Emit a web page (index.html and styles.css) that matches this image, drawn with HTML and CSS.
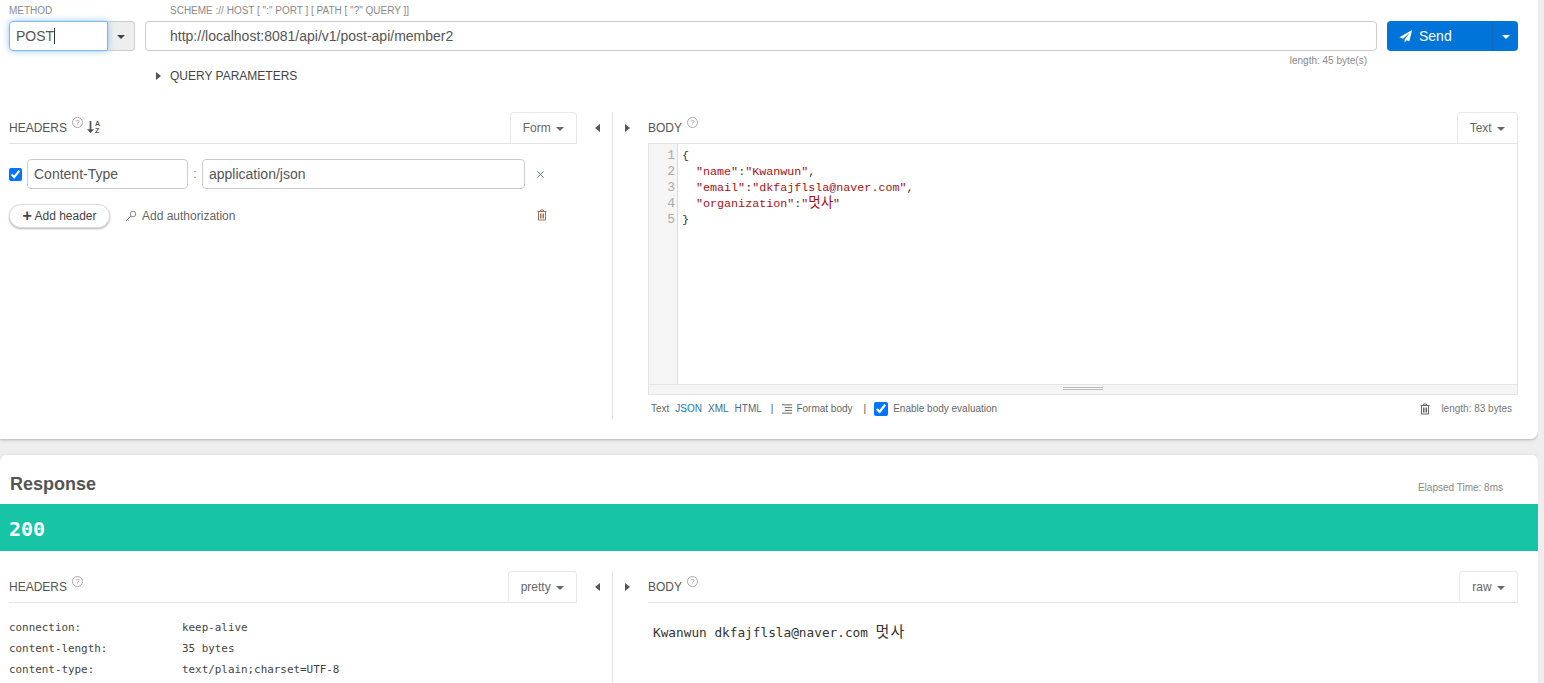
FILE: index.html
```html
<!DOCTYPE html>
<html lang="en">
<head>
    <meta charset="UTF-8">
    <meta name="viewport" content="width=device-width, initial-scale=1.0">
    <title>Talend API Tester</title>
    <link rel="stylesheet" href="styles.css">
</head>
<body>
    <div class="panel request">
        <div class="url-row">
            <div class="method">
                <label class="hint">METHOD</label>
                <div class="method-box">
                    <div class="method-input">POST<span class="cursor"></span></div>
                    <button class="method-caret"><span class="caret"></span></button>
                </div>
            </div>
            <div class="url">
                <label class="hint url-hint">SCHEME :// HOST [ ":" PORT ] [ PATH [ "?" QUERY ]]</label>
                <input class="url-input" type="text" value="http://localhost:8081/api/v1/post-api/member2">
                <div class="url-length">length: 45 byte(s)</div>
            </div>
            <div class="send">
                <button class="send-main">
                    <svg class="send-icon" viewBox="0 0 16 16"><path d="M15 1 L0.5 9.4 L4.6 11 L12.6 4 L6.4 11.9 L6.4 15.4 L8.7 12.9 L11.8 14.2 Z"/></svg>
                    Send
                </button>
                <button class="send-more"><span class="caret white"></span></button>
            </div>
        </div>
        <div class="query"><span class="arrow-right"></span>QUERY PARAMETERS</div>

        <div class="split">
            <div class="left">
                <div class="pane-head">
                    <span class="pane-title">HEADERS</span>
                    <span class="help">?</span>
                    <span class="sort">
                        <svg viewBox="0 0 8 14"><path d="M3 0h2v9.500h3L4 14 0 9.500h3z"/></svg>
                        <span class="sort-letters">A<br>Z</span>
                    </span>
                    <button class="tab">Form <span class="caret"></span></button>
                </div>
                <div class="header-row">
                    <input class="check" type="checkbox" checked>
                    <input class="field field-name" type="text" value="Content-Type">
                    <span class="colon">:</span>
                    <input class="field field-value" type="text" value="application/json">
                    <svg class="remove" viewBox="0 0 10 10"><path d="M1.500 1.500l7 7M8.500 1.500l-7 7"/></svg>
                </div>
                <div class="header-actions">
                    <button class="add-header"><b>+</b> Add header</button>
                    <span class="add-auth">
                        <svg class="key" viewBox="0 0 12 12"><circle cx="8" cy="4" r="2.800"/><path d="M6 6 1 11M2.500 9.500l1.200 1.200"/></svg>
                        Add authorization
                    </span>
                    <svg class="trash trash-red" viewBox="0 0 12 12"><path d="M4.500 2V1h3v1M1.500 2.500h9M2.500 2.500v8.500h7V2.500M4.500 4.500V9.500M6 4.500V9.500M7.500 4.500V9.500"/></svg>
                </div>
            </div>
            <div class="toggles">
                <span class="arrow-left"></span>
            </div>
            <div class="right">
                <div class="right-toggle"><span class="arrow-right"></span></div>
                <div class="right-main">
                    <div class="pane-head">
                        <span class="pane-title">BODY</span>
                        <span class="help">?</span>
                        <button class="tab">Text <span class="caret"></span></button>
                    </div>
                    <div class="editor">
                        <div class="editor-main">
                            <div class="gutter">1<br>2<br>3<br>4<br>5</div>
<pre class="code">{
  <span class="str">"name"</span>:<span class="str">"Kwanwun"</span>,
  <span class="str">"email"</span>:<span class="str">"dkfajflsla@naver.com"</span>,
  <span class="str">"organization"</span>:<span class="str">"<span class="ko">멋사</span>"</span>
}</pre>
                        </div>
                        <div class="editor-grip"><span></span></div>
                    </div>
                    <div class="body-foot">
                        <span class="foot-link plain">Text</span>
                        <span class="foot-link active">JSON</span>
                        <span class="foot-link">XML</span>
                        <span class="foot-link">HTML</span>
                        <span class="sep">|</span>
                        <svg class="format" viewBox="0 0 12 10"><path d="M0 .5h11M3 3.500h8M3 6.500h8M0 9.500h11"/></svg>
                        <span class="format-label">Format body</span>
                        <span class="sep sep-2">|</span>
                        <input class="check check-foot" type="checkbox" checked>
                        <span class="eval">Enable body evaluation</span>
                        <svg class="trash foot-trash" viewBox="0 0 12 12"><path d="M4.500 2V1h3v1M1.500 2.500h9M2.500 2.500v8.500h7V2.500M4.500 4.500V9.500M6 4.500V9.500M7.500 4.500V9.500"/></svg>
                        <span class="foot-length">length: 83 bytes</span>
                    </div>
                </div>
            </div>
        </div>
    </div>

    <div class="panel response">
        <div class="response-head">
            <h2>Response</h2>
            <span class="elapsed">Elapsed Time: 8ms</span>
        </div>
        <div class="status">200</div>
        <div class="split split-response">
            <div class="left">
                <div class="pane-head">
                    <span class="pane-title">HEADERS</span>
                    <span class="help">?</span>
                    <button class="tab">pretty <span class="caret"></span></button>
                </div>
                <div class="resp-headers">
                    <div class="resp-row"><span class="resp-key">connection:</span><span>keep-alive</span></div>
                    <div class="resp-row"><span class="resp-key">content-length:</span><span>35 bytes</span></div>
                    <div class="resp-row"><span class="resp-key">content-type:</span><span>text/plain;charset=UTF-8</span></div>
                </div>
            </div>
            <div class="toggles">
                <span class="arrow-left"></span>
            </div>
            <div class="right">
                <div class="right-toggle"><span class="arrow-right"></span></div>
                <div class="right-main">
                    <div class="pane-head">
                        <span class="pane-title">BODY</span>
                        <span class="help">?</span>
                        <button class="tab">raw <span class="caret"></span></button>
                    </div>
                    <div class="resp-body">Kwanwun dkfajflsla@naver.com <span class="ko-body">멋사</span></div>
                </div>
            </div>
        </div>
    </div>
</body>
</html>
```

FILE: styles.css
```css
* { margin: 0; padding: 0; box-sizing: border-box; }
html, body { height: 683px; overflow: hidden; }
body { font-family: "Liberation Sans", Arial, sans-serif; background: #eeeeee; color: #555; width: 1538px; }
button { font-family: inherit; cursor: pointer; }

.panel { background: white; }
.request { height: 439px; border-radius: 0 0 8px 0; box-shadow: 0 1px 3px rgba(0,0,0,0.25); padding-top: 5px; }
.response { height: 229px; margin-top: 15px; border-radius: 8px 8px 0 0; box-shadow: 0 0 1px rgba(0,0,0,0.15); }

.url-row { display: flex; padding-left: 9px; height: 46px; }
.hint { display: block; font-size: 10px; line-height: 12px; color: #8a8a8a; height: 16px; }
.method { width: 136px; }
.method-box { display: flex; height: 30px; }
.method-input { width: 99px; border: 1px solid #7db8ec; border-radius: 4px 0 0 4px; box-shadow: 0 0 6px rgba(70,160,240,0.6); font-size: 14px; line-height: 28px; padding-left: 6px; color: #555; position: relative; z-index: 1; }
.cursor { display: inline-block; width: 1px; height: 16px; background: #333; vertical-align: -3px; }
.method-caret { width: 27px; border: 1px solid #ccc; border-left: none; border-radius: 0 4px 4px 0; background: #eeeeee; }
.caret { display: inline-block; width: 0; height: 0; border-left: 4px solid transparent; border-right: 4px solid transparent; border-top: 4px solid #444; vertical-align: 2px; }
.caret.white { border-top-color: white; }

.url { width: 1232px; }
.url-hint { padding-left: 25px; }
.url-input { display: block; width: 100%; height: 30px; border: 1px solid #ccc; border-radius: 4px; padding-left: 24px; font: 14px "Liberation Sans", Arial, sans-serif; color: #555; outline: none; }
.url-length { font-size: 10px; color: #8a8a8a; text-align: right; padding-right: 10px; margin-top: 4px; line-height: 11px; }

.send { display: flex; height: 30px; width: 131px; margin: 16px 0 0 10px; }
.send-main { width: 106px; background: #0074d9; color: white; border: none; border-right: 1px solid #1a66b3; border-radius: 4px 0 0 4px; font-size: 14px; display: flex; align-items: center; padding-left: 12px; gap: 6px; }
.send-icon { width: 14px; height: 14px; fill: white; }
.send-more { width: 25px; background: #0074d9; border: none; border-radius: 0 4px 4px 0; }

.query { height: 61px; padding: 18px 0 0 156px; font-size: 12px; line-height: 14px; color: #444; }
.query .arrow-right { margin-right: 9px; }
.arrow-right { display: inline-block; width: 0; height: 0; border-top: 4px solid transparent; border-bottom: 4px solid transparent; border-left: 5px solid #555; }
.arrow-left { display: inline-block; width: 0; height: 0; border-top: 4px solid transparent; border-bottom: 4px solid transparent; border-right: 5px solid #555; }

.split { display: flex; height: 307px; }
.split-response { height: 132px; padding-top: 20px; }
.left { width: 577px; padding-left: 9px; }
.toggles { width: 36px; border-right: 1px solid #e4e4e4; padding: 11px 0 0 18px; line-height: 8px; }
.right { width: 905px; display: flex; }
.right-toggle { width: 35px; padding: 11px 0 0 12px; line-height: 8px; }
.right-main { width: 870px; }

.pane-head { display: flex; align-items: flex-start; height: 32px; border-bottom: 1px solid #e4e4e4; position: relative; }
.pane-title { font-size: 12px; line-height: 14px; margin-top: 9px; color: #555; }
.help { width: 11px; height: 11px; border: 1px solid #aaa; border-radius: 50%; font-size: 8px; line-height: 9px; text-align: center; color: #999; margin: 5px 0 0 5px; }
.sort { display: flex; margin: 8px 0 0 4px; }
.sort svg { width: 7px; height: 14px; fill: #555; }
.sort-letters { font-size: 7px; line-height: 7px; font-weight: bold; color: #555; margin-left: 1px; }
.tab { position: absolute; right: 0; top: 0; height: 31px; background: white; border: 1px solid #e8e8e8; border-bottom: none; border-radius: 4px 4px 0 0; font-size: 12px; color: #666; padding: 0 12px; }
.tab .caret { margin-left: 2px; border-top-color: #666; vertical-align: 1px; }

.header-row { display: flex; align-items: center; margin-top: 15px; height: 30px; }
.check { width: 13px; height: 13px; accent-color: #0075ff; margin: 0; }
.field { height: 30px; border: 1px solid #ccc; border-radius: 4px; font: 14px "Liberation Sans", Arial, sans-serif; color: #555; padding-left: 6px; outline: none; }
.field-name { width: 161px; margin-left: 5px; }
.colon { width: 14px; text-align: center; font-size: 12px; color: #777; }
.field-value { width: 323px; }
.remove { width: 9px; height: 9px; margin-left: 11px; stroke: #3f7f72; stroke-width: 1; fill: none; }

.header-actions { display: flex; align-items: center; margin-top: 15px; height: 24px; position: relative; }
.add-header { width: 101px; height: 24px; background: white; border: 1px solid #ddd; border-radius: 12px; box-shadow: 0 1px 2px rgba(0,0,0,0.3); font-size: 12px; color: #444; }
.add-header b { font-size: 16px; line-height: 12px; vertical-align: -1px; }
.add-auth { display: flex; align-items: center; gap: 5px; font-size: 12px; color: #666; margin-left: 15px; }
.key { width: 12px; height: 12px; fill: none; stroke: #888; stroke-width: 1; }
.trash { width: 12px; height: 12px; fill: none; stroke: #666; stroke-width: 1; }
.trash-red { position: absolute; left: 527px; top: 5px; stroke: #a0705f; }

.editor { height: 251px; border: 1px solid #e4e4e4; border-top: none; display: flex; flex-direction: column; }
.editor-main { flex: 1; display: flex; min-height: 0; }
.gutter { width: 29px; flex: none; background: #f5f5f5; border-right: 1px solid #ddd; font: 13px/16px "Liberation Mono", monospace; color: #aaa; text-align: right; padding: 4px 2px 0 0; }
.code { font: 11.700px/16px "Liberation Mono", "Noto Sans CJK KR", monospace; color: #333; padding: 4px 0 0 4px; }
.str { color: #a11; }
.ko { font-size: 13.500px; line-height: 14px; }
.editor-grip { height: 10px; flex: none; background: #f5f5f5; border-top: 1px solid #e4e4e4; display: flex; justify-content: center; padding-top: 2px; }
.editor-grip span { width: 40px; height: 3px; border-top: 1px solid #bbb; border-bottom: 1px solid #bbb; }

.body-foot { display: flex; align-items: center; height: 27px; font-size: 10px; color: #666; padding-left: 3px; }
.foot-link { margin-right: 6px; color: #4b6a85; }
.foot-link.plain { color: #666; }
.foot-link.active { color: #1a7ac0; }
.sep { margin: 0 9px 0 3px; color: #555; }
.sep-2 { margin: 0 8px 0 11px; }
.format { width: 11px; height: 10px; fill: none; stroke: #555; stroke-width: 1; margin-right: 3px; }
.check-foot { width: 14px; height: 14px; margin-right: 5px; }
.foot-trash { margin-left: auto; }
.foot-length { margin: 0 6px 0 10px; color: #777; }

.response-head { display: flex; align-items: flex-start; height: 50px; padding-left: 10px; border-top: 1px solid #e6e6e6; }
.response-head h2 { font-size: 18px; line-height: 20px; margin-top: 19px; color: #555; }
.elapsed { margin: 27px 35px 0 auto; font-size: 10px; color: #888; }
.status { height: 47px; background: #17c4a5; color: white; font: bold 20px/50px "DejaVu Sans Mono", monospace; padding-left: 9px; }

.resp-headers { padding-top: 14px; font: 10.900px/21px "DejaVu Sans Mono", monospace; color: #444; }
.resp-row { display: flex; }
.resp-key { width: 173px; }
.resp-body { font: 12.750px/18px "DejaVu Sans Mono", "Noto Sans CJK KR", monospace; color: #333; padding: 20px 0 0 5px; }
.ko-body { font-size: 15px; line-height: 18px; letter-spacing: 1px; }
```
